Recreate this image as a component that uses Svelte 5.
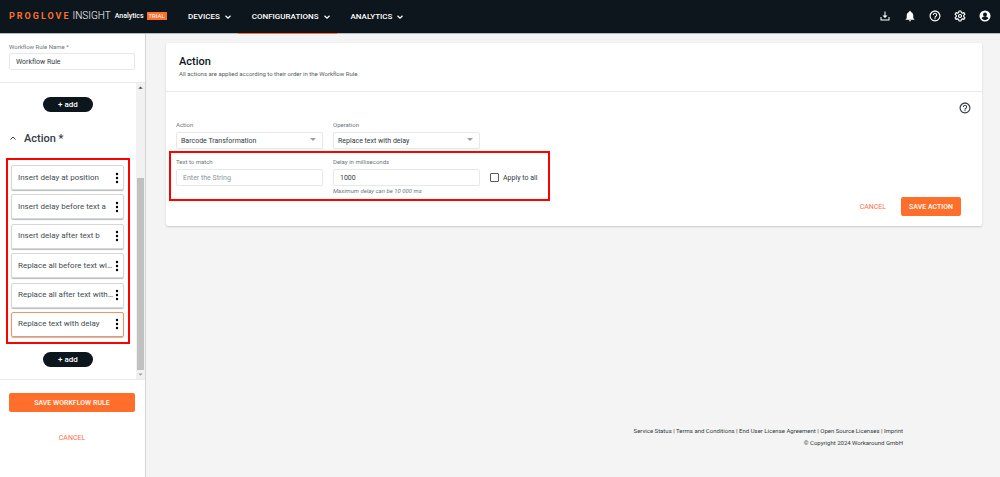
<script lang="ts">
  const menus = [
    { label: 'DEVICES', active: false },
    { label: 'CONFIGURATIONS', active: true },
    { label: 'ANALYTICS', active: false },
  ];

  const footerLinks = [
    'Service Status',
    'Terms and Conditions',
    'End User License Agreement',
    'Open Source Licenses',
    'Imprint',
  ];

  const actions = [
    'Insert delay at position',
    'Insert delay before text a',
    'Insert delay after text b',
    'Replace all before text with delay',
    'Replace all after text with delay',
    'Replace text with delay',
  ];

  let selected = $state(5);
  let ruleName = $state('Workflow Rule');
  let match = $state('');
  let delay = $state('1000');
  let applyToAll = $state(false);
</script>

{#snippet helpIcon()}
  <svg class="icon" viewBox="1 1 22 22" aria-hidden="true">
    <path d="M11 18h2v-2h-2v2zm1-16C6.48 2 2 6.48 2 12s4.48 10 10 10 10-4.48 10-10S17.52 2 12 2zm0 18c-4.41 0-8-3.59-8-8s3.59-8 8-8 8 3.59 8 8-3.59 8-8 8zm0-14c-2.21 0-4 1.79-4 4h2c0-1.1.9-2 2-2s2 .9 2 2c0 2-3 1.75-3 5h2c0-2.25 3-2.5 3-5 0-2.21-1.79-4-4-4z" />
  </svg>
{/snippet}

<div class="page">
  <header class="topbar">
    <a class="brand" href="#home">
      <span class="brand-name">PROGLOVE</span>
      <span class="brand-product">INSIGHT</span>
      <span class="brand-plan">Analytics</span>
      <span class="trial">TRIAL</span>
    </a>
    <nav class="menus">
      {#each menus as menu}
        <button class="menu" class:active={menu.active}>
          {menu.label}
          <svg class="chevron" viewBox="0 0 8 8" aria-hidden="true"><path d="M1.5 2.8 4 5.2l2.5-2.4" /></svg>
        </button>
      {/each}
    </nav>
    <div class="tools">
      <button class="tool" aria-label="Downloads">
        <svg class="icon" viewBox="0 0 24 24">
          <path d="M11 3h2v8h4l-5 5-5-5h4zM3 14h2v5h14v-5h2v7H3z" />
        </svg>
      </button>
      <button class="tool" aria-label="Notifications">
        <svg class="icon" viewBox="1 1 22 22">
          <path d="M12 22c1.1 0 2-.9 2-2h-4c0 1.1.9 2 2 2zm6-6v-5c0-3.07-1.63-5.64-4.5-6.32V4c0-.83-.67-1.5-1.5-1.5s-1.5.67-1.5 1.5v.68C7.64 5.36 6 7.92 6 11v5l-2 2v1h16v-1l-2-2z" />
        </svg>
      </button>
      <button class="tool" aria-label="Help">{@render helpIcon()}</button>
      <button class="tool" aria-label="Settings">
        <svg class="icon gear" viewBox="0 0 24 24">
          <path d="M10 2h4l.6 3 2.2 1.3 2.9-1 2 3.5-2.3 2v2.4l2.3 2-2 3.5-2.9-1-2.2 1.3-.6 3h-4l-.6-3-2.2-1.3-2.9 1-2-3.5 2.3-2v-2.4l-2.3-2 2-3.5 2.9 1L9.4 5z" />
          <circle cx="12" cy="12" r="3" />
        </svg>
      </button>
      <button class="tool" aria-label="Account">
        <svg class="icon" viewBox="0 0 24 24">
          <path fill-rule="evenodd" d="M12 1a11 11 0 1 0 0 22 11 11 0 0 0 0-22zm0 4a4 4 0 1 1 0 8 4 4 0 0 1 0-8zm0 15c-2.7 0-5.2-1.3-6.6-3.6 0-2.2 4.4-3.4 6.6-3.4s6.6 1.2 6.6 3.4C17.2 18.7 14.7 20 12 20z" />
        </svg>
      </button>
    </div>
  </header>

  <div class="body">
    <aside class="sidebar">
      <div class="rule-name">
        <label for="rule-name">Workflow Rule Name *</label>
        <input id="rule-name" class="field" type="text" bind:value={ruleName} />
      </div>

      <div class="scroller">
        <div class="steps">
          <button class="add">+ add</button>
          <h2 class="section">
            <svg class="collapse" viewBox="0 0 8 8" aria-hidden="true"><path d="M1.5 4.5 4 2l2.5 2.5" /></svg>
            Action *
          </h2>
          <ul class="actions marked">
            {#each actions as action, i}
              <li class="action" class:selected={i === selected}>
                <button class="action-name" onclick={() => (selected = i)}>{action}</button>
                <button class="more" aria-label="More options">
                  <svg viewBox="0 0 4 12"><circle cx="2" cy="2" r="1.2" /><circle cx="2" cy="6" r="1.2" /><circle cx="2" cy="10" r="1.2" /></svg>
                </button>
              </li>
            {/each}
          </ul>
          <button class="add">+ add</button>
        </div>
        <div class="scrollbar" aria-hidden="true">
          <svg class="arrow" viewBox="0 0 8 8"><path d="M2 5h4L4 3z" /></svg>
          <div class="track"><div class="thumb"></div></div>
          <svg class="arrow dim" viewBox="0 0 8 8"><path d="M2 3h4L4 5z" /></svg>
        </div>
      </div>

      <div class="sidebar-buttons">
        <button class="primary">SAVE WORKFLOW RULE</button>
        <button class="plain">CANCEL</button>
      </div>
    </aside>

    <main class="content">
      <section class="card">
        <div class="card-head">
          <h1>Action</h1>
          <p>All actions are applied according to their order in the Workflow Rule.</p>
        </div>
        <div class="card-help">
          <button class="tool" aria-label="Action help">{@render helpIcon()}</button>
        </div>
        <div class="form">
          <div class="row">
            <div class="cell">
              <label for="action-type">Action</label>
              <div class="select">
                <select id="action-type" class="field">
                  <option>Barcode Transformation</option>
                </select>
              </div>
            </div>
            <div class="cell">
              <label for="operation">Operation</label>
              <div class="select">
                <select id="operation" class="field">
                  <option>Replace text with delay</option>
                </select>
              </div>
            </div>
          </div>
          <div class="row marked">
            <div class="cell">
              <label for="match">Text to match</label>
              <input id="match" class="field" type="text" placeholder="Enter the String" bind:value={match} />
            </div>
            <div class="cell">
              <label for="delay">Delay in milliseconds</label>
              <input id="delay" class="field" type="text" bind:value={delay} />
              <p class="hint">Maximum delay can be 10 000 ms</p>
            </div>
            <label class="check">
              <input type="checkbox" bind:checked={applyToAll} />
              Apply to all
            </label>
          </div>
        </div>
        <div class="card-buttons">
          <button class="plain">CANCEL</button>
          <button class="primary">SAVE ACTION</button>
        </div>
      </section>

      <footer class="footer">
        <p>
          {#each footerLinks as link, i}{i > 0 ? ' | ' : ''}<a href="#footer">{link}</a>{/each}
        </p>
        <p>© Copyright 2024 Workaround GmbH</p>
      </footer>
    </main>
  </div>
</div>

<style>
  :global(body) {
    margin: 0;
    background: #f4f4f4;
  }
  .page {
    display: flex;
    flex-direction: column;
    min-height: 100vh;
    font-family: Roboto, 'Liberation Sans', sans-serif;
    font-size: 8px;
    line-height: 10px;
    color: #333b41;
  }
  .page * {
    box-sizing: border-box;
  }
  button,
  input,
  select {
    font: inherit;
    color: inherit;
  }
  button {
    border: 0;
    padding: 0;
    background: none;
    cursor: pointer;
  }
  h1,
  h2,
  p,
  ul {
    margin: 0;
    padding: 0;
  }
  a {
    color: inherit;
    text-decoration: none;
  }

  /* top bar */
  .topbar {
    display: flex;
    height: 34px;
    padding: 0 9px 1px;
    background: #0d161d;
    border-bottom: 1px solid #b5b8ba;
    color: #fff;
  }
  .brand {
    display: flex;
    align-items: center;
    width: 165px;
  }
  .brand-name {
    color: #ff6f2b;
    font-size: 9px;
    font-weight: 700;
    letter-spacing: 2px;
  }
  .brand-product {
    margin-left: 2px;
    font-size: 10px;
    font-weight: 300;
  }
  .brand-plan {
    margin-left: 4px;
    font-size: 7px;
    font-weight: 500;
  }
  .trial {
    margin-left: 3px;
    padding: 0 2px;
    background: #ff6f2b;
    font-size: 6px;
    line-height: 8px;
  }
  .menus {
    display: flex;
  }
  .menu {
    display: flex;
    align-items: center;
    gap: 4px;
    height: 34px;
    padding: 0 6px 0 14px;
    border-bottom: 1px solid transparent;
    font-weight: 500;
  }
  .menu.active {
    border-color: #ff6f2b;
  }
  .chevron,
  .collapse {
    width: 8px;
    height: 8px;
    fill: none;
    stroke: currentColor;
    stroke-width: 1.2;
  }
  .collapse {
    stroke-width: 1;
  }
  .tools {
    display: flex;
    align-items: center;
    gap: 13px;
    margin-left: auto;
  }
  .tool {
    display: flex;
  }
  .icon {
    width: 12px;
    height: 12px;
    fill: currentColor;
  }
  .gear {
    fill: none;
    stroke: currentColor;
    stroke-width: 2.4;
    stroke-linejoin: round;
  }

  .body {
    display: flex;
    flex: 1;
  }

  /* sidebar */
  .sidebar {
    display: flex;
    flex-direction: column;
    flex: none;
    width: 146px;
    background: #fff;
    border-right: 1px solid #d2d4d5;
  }
  .rule-name {
    padding: 8px 10px 12px 9px;
    border-bottom: 1px solid #e8e9ea;
  }
  label {
    display: block;
    color: #6f767b;
    font-size: 6px;
  }
  .field {
    display: block;
    width: 100%;
    height: 17px;
    margin: 0;
    padding: 0 6px;
    background: #fff;
    border: 1px solid #e6e8e9;
    border-radius: 2px;
    outline: none;
    font-size: 7px;
    appearance: none;
  }
  .rule-name .field {
    margin-top: 1px;
  }
  .field::placeholder {
    color: #8c959c;
    opacity: 1;
  }
  .scroller {
    display: flex;
    border-bottom: 1px solid #e8e9ea;
  }
  .steps {
    display: flex;
    flex-direction: column;
    align-items: center;
    flex: 1;
    min-width: 0;
    padding: 14px 6px 12px;
  }
  .add {
    width: 50px;
    height: 15px;
    background: #0d161d;
    border-radius: 8px;
    color: #fff;
    font-weight: 500;
  }
  .section {
    display: flex;
    align-items: center;
    gap: 7px;
    align-self: stretch;
    margin: 20px 0 12px;
    padding-left: 3px;
    font-size: 11px;
    font-weight: 500;
    line-height: 14px;
  }
  .marked {
    border: 2px solid #f00;
  }
  .actions {
    display: flex;
    flex-direction: column;
    justify-content: space-between;
    align-self: stretch;
    height: 186px;
    margin-bottom: 8px;
    padding: 5px 4px 5px 3px;
    list-style: none;
  }
  .action {
    display: flex;
    align-items: center;
    height: 25px;
    padding: 0 4px 0 6px;
    border: 1px solid #d5d7d9;
    border-radius: 2px;
    box-shadow: 0 1px 1px #b9bcbe;
  }
  .action.selected {
    border-color: #ff8f5c;
  }
  .action-name {
    flex: 1;
    min-width: 0;
    overflow: hidden;
    color: #444b51;
    text-align: left;
    text-overflow: ellipsis;
    white-space: nowrap;
  }
  .more {
    display: flex;
    margin-left: 1px;
  }
  .more svg {
    width: 4px;
    height: 12px;
  }
  .scrollbar {
    display: flex;
    flex-direction: column;
    width: 9px;
    background: #f1f1f1;
  }
  .arrow {
    width: 9px;
    height: 9px;
    fill: #505050;
  }
  .arrow.dim {
    fill: #a3a3a3;
  }
  .track {
    display: flex;
    flex: 1;
    align-items: flex-end;
    padding: 0 1px;
  }
  .thumb {
    width: 100%;
    height: 69%;
    background: #c1c1c1;
  }
  .sidebar-buttons {
    display: flex;
    flex-direction: column;
    gap: 16px;
    padding: 13px 10px 13px 9px;
  }
  .primary {
    height: 19px;
    padding: 0 8px;
    background: #ff6f2b;
    border-radius: 2px;
    color: #fff;
    font-size: 7px;
    font-weight: 500;
  }
  .plain {
    height: 19px;
    color: #ff6f4a;
    font-size: 7px;
  }

  /* main area */
  .content {
    display: flex;
    flex-direction: column;
    flex: 1;
    min-width: 0;
    padding: 9px 18px 28px 20px;
  }
  .card {
    background: #fff;
    border-radius: 2px;
    box-shadow: 0 1px 2px #c8cacb;
  }
  .card-head {
    padding: 12px 13px;
    border-bottom: 1px solid #e8e9ea;
  }
  .card-head h1 {
    color: #0d161d;
    font-size: 11px;
    font-weight: 500;
    line-height: 14px;
  }
  .card-head p {
    color: #555c61;
    font-size: 6px;
  }
  .card-help {
    display: flex;
    justify-content: flex-end;
    padding: 10px 11px 0;
  }
  .form {
    display: flex;
    flex-direction: column;
    align-items: flex-start;
    padding: 6px 3px 0;
  }
  .row {
    display: flex;
    gap: 10px;
    padding: 0 11px 2px 7px;
  }
  .row.marked {
    padding: 4px 11px 3px 5px;
  }
  .cell {
    width: 147px;
  }
  .cell .field {
    margin-top: 2px;
  }
  .select {
    display: grid;
    align-items: center;
  }
  .select .field {
    grid-area: 1 / 1;
    padding: 0 4px;
  }
  .select::after {
    content: '';
    grid-area: 1 / 1;
    justify-self: end;
    margin-right: 7px;
    border: 3px solid transparent;
    border-top-color: #9a9fa3;
    border-bottom: 0;
    pointer-events: none;
  }
  .hint {
    color: #6f767b;
    font-size: 6px;
    font-style: italic;
  }
  .check {
    display: flex;
    align-items: center;
    gap: 4px;
    height: 17px;
    margin-top: 12px;
    color: #333b41;
    font-size: 7px;
  }
  .check input {
    width: 9px;
    height: 9px;
    margin: 0;
    border: 1px solid #555c61;
    border-radius: 1px;
    appearance: none;
  }
  .check input:checked {
    background: #ff6f2b;
  }
  .card-buttons {
    display: flex;
    justify-content: flex-end;
    gap: 15px;
    margin-top: -4px;
    padding: 0 21px 10px;
  }
  .footer {
    margin-top: auto;
    padding-right: 79px;
    font-size: 6px;
    line-height: 12px;
    text-align: right;
  }
</style>
